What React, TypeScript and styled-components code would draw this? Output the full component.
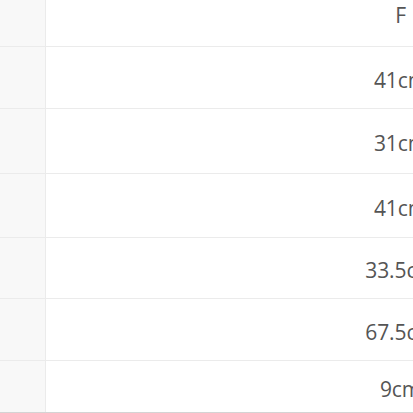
import React from "react";
import styled, { createGlobalStyle } from "styled-components";

const Global = createGlobalStyle`
  html, body { margin: 0; padding: 0; background: #fff; }
  body { overflow: hidden; width: 413px; height: 413px; }
`;

const Viewport = styled.div`
  width: 413px;
  height: 413px;
  overflow: hidden;
  background: #fff;
`;

const Table = styled.div`
  margin-top: -16px;
  display: flex;
  flex-direction: column;
  width: 770px;
  font-family: "Open Sans", "Liberation Sans", sans-serif;
  color: #555;
`;

const Row = styled.div<{ $h: number; $last?: boolean }>`
  display: grid;
  grid-template-columns: 46px 709px;
  height: ${(p) => p.$h}px;
  border-bottom: 1px solid ${(p) => (p.$last ? "#d4d4d4" : "#ebebeb")};
  box-sizing: border-box;
`;

const LabelCell = styled.div`
  background: #f8f8f8;
  border-right: 1px solid #ebebeb;
`;

const ValueCell = styled.div<{ $head?: boolean }>`
  display: flex;
  align-items: center;
  justify-content: center;
  padding-top: ${(p) => (p.$head ? 0 : 4)}px;
  font-size: 21px;
  letter-spacing: -0.1px;
`;

const rows: { v: string; h: number }[] = [
  { v: "41cm", h: 62 },
  { v: "31cm", h: 65 },
  { v: "41cm", h: 64 },
  { v: "33.5cm", h: 61 },
  { v: "67.5cm", h: 62 },
  { v: "9cm", h: 52 },
];

export default function App() {
  return (
    <Viewport>
      <Global />
      <Table>
        <Row $h={63}>
          <LabelCell />
          <ValueCell $head>F</ValueCell>
        </Row>
        {rows.map((r, i) => (
          <Row key={i} $h={r.h} $last={i === rows.length - 1}>
            <LabelCell />
            <ValueCell>{r.v}</ValueCell>
          </Row>
        ))}
      </Table>
    </Viewport>
  );
}
